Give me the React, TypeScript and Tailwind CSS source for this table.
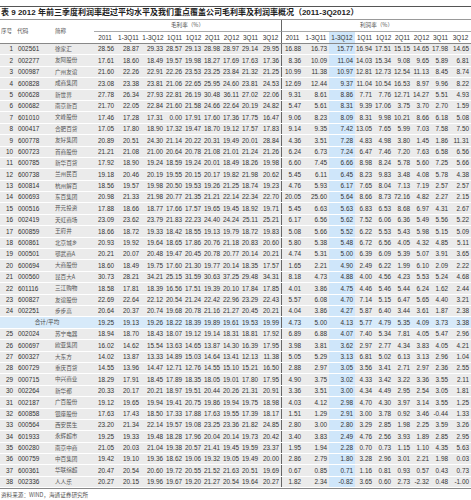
import React from "react";

const raw = `1|002561|徐家汇|28.56 28.87 29.33 28.57 29.13 28.98 28.97 29.14 29.95|16.88 16.73 15.77 16.94 17.51 15.15 14.65 17.98 14.65
2|002277|友阿股份|17.61 18.60 18.49 19.57 19.98 18.27 17.69 17.63 17.36|8.36 10.09 11.04 14.03 15.34 9.08 9.65 5.89 6.81
3|000987|广州友谊|21.60 22.26 22.91 22.26 23.53 23.25 23.84 21.32 21.25|10.99 11.38 10.97 12.81 12.73 12.54 11.13 8.45 8.74
4|600828|成商集团|23.08 23.38 23.81 21.06 22.65 25.95 24.60 23.81 24.53|12.69 12.44 9.37 11.04 10.54 16.53 8.97 9.96 8.22
5|600628|新世界|27.78 26.34 27.93 22.81 26.19 30.48 36.11 27.02 22.06|9.31 8.61 8.86 7.71 7.76 12.71 14.27 5.51 4.93
6|600682|南京新百|21.70 22.05 22.84 21.60 21.58 24.66 22.64 20.19 24.82|5.47 5.61 8.31 9.39 17.06 3.75 3.70 2.70 1.59
7|601010|文峰股份|17.46 17.28 17.31 0.00 17.91 17.60 17.36 17.75 16.47|9.06 8.23 8.09 8.31 9.98 10.21 8.66 6.18 5.08
8|000417|合肥百货|17.05 17.80 18.90 17.32 19.47 18.70 19.12 17.57 17.83|9.14 9.35 7.42 13.05 7.65 5.99 7.03 7.58 7.50
9|600778|友好集团|20.89 20.51 24.30 21.14 20.22 20.31 19.49 20.01 28.84|4.36 3.51 7.28 4.83 4.98 3.80 1.45 1.86 11.31
10|600723|首商股份|21.21 21.08 21.00 20.64 20.78 21.08 21.01 21.24 21.26|6.24 6.73 7.24 6.47 7.46 7.20 7.63 6.58 6.56
11|600785|新华百货|17.92 18.90 19.24 18.59 19.24 20.01 18.49 18.26 19.98|6.60 7.45 6.66 8.98 8.24 5.78 5.60 7.25 5.66
12|600738|兰州民百|19.18 20.46 20.19 19.55 20.15 20.17 19.82 21.98 20.62|5.45 6.11 6.45 8.23 9.83 3.48 4.08 5.78 4.38
13|600814|杭州解百|18.56 19.57 19.98 20.50 19.53 19.26 21.25 18.74 19.23|4.76 5.93 6.17 7.65 8.04 7.13 7.19 2.57 2.57
14|600693|东百集团|20.98 21.33 21.98 20.77 21.35 21.21 22.14 22.34 22.70|20.05 25.60 5.64 8.66 8.73 72.16 4.82 2.27 2.15
15|000516|开元投资|17.88 18.66 18.77 17.66 17.57 19.65 19.45 18.92 19.71|5.45 6.63 5.63 6.83 6.53 8.68 6.97 4.31 2.67
16|002419|天虹商场|23.09 23.62 23.79 21.83 22.23 24.40 24.24 25.11 25.21|6.17 6.56 5.62 7.52 6.06 6.36 5.49 5.56 5.22
17|600859|王府井|18.66 18.72 19.33 18.42 18.55 19.13 19.79 18.72 19.83|5.08 5.66 5.52 6.22 5.53 5.43 5.98 5.15 5.09
18|600861|北京城乡|20.93 19.92 19.64 18.65 17.86 20.76 21.18 20.83 20.60|5.80 5.38 5.48 6.72 6.56 4.05 4.32 4.85 5.11
19|000501|鄂武商A|20.21 20.07 20.48 19.47 20.45 20.78 20.77 20.14 20.21|4.74 5.31 5.00 6.39 6.09 5.39 5.07 3.91 3.65
20|600694|大商股份|18.60 18.49 19.75 17.60 21.30 19.77 20.14 18.35 17.57|1.65 2.21 4.90 2.49 6.22 1.99 6.10 2.09 2.22
21|000560|昆百大A|30.73 28.21 34.21 25.15 31.59 30.63 37.25 29.48 34.31|8.18 4.73 4.88 4.00 4.56 4.23 5.53 5.24 4.68
22|601116|三江购物|18.58 17.81 18.39 16.56 17.51 19.39 20.10 17.84 17.85|4.01 3.86 4.75 4.46 5.46 5.44 6.24 1.62 2.44
23|600827|友谊股份|22.69 22.64 22.12 20.54 21.24 22.42 22.96 23.29 22.43|5.57 6.08 4.70 7.14 5.15 6.47 5.65 4.40 3.21
24|002251|步步高|20.64 20.37 20.74 19.68 20.78 21.16 21.27 20.45 20.21|4.04 3.86 4.27 5.87 6.40 3.44 3.61 1.87 2.38
*||合计/平均|19.25 19.13 19.26 18.22 18.39 19.89 19.61 19.53 19.99|4.73 5.00 4.13 5.77 4.79 5.35 4.09 3.73 3.38
25|002024|苏宁电器|18.94 18.70 18.43 18.07 19.12 19.14 18.31 18.81 17.92|6.89 6.88 4.07 7.40 5.34 7.81 4.05 5.47 2.96
26|600697|欧亚集团|16.02 14.62 15.54 13.63 14.65 13.87 14.30 16.39 17.95|3.98 3.81 3.62 2.97 2.77 4.34 3.83 4.05 4.21
27|600327|大东方|14.02 13.87 13.33 14.89 15.03 14.64 13.41 12.13 11.38|5.05 5.29 3.13 6.81 5.02 6.13 3.13 2.96 1.04
28|600729|重庆百货|14.55 13.96 14.47 12.71 12.76 14.55 15.10 15.21 16.50|2.88 2.97 3.05 3.56 3.41 2.71 2.97 2.36 2.55
29|000715|中兴商业|18.29 17.91 18.45 17.89 18.35 18.05 19.01 17.80 17.95|4.90 3.75 3.02 4.33 3.42 3.22 3.36 3.55 2.11
30|002264|新华都|20.33 20.17 20.21 18.97 19.51 20.44 20.26 21.31 20.91|3.36 3.51 3.00 4.34 4.49 2.95 2.54 3.05 1.81
31|002187|广百股份|19.12 19.65 19.94 19.41 20.75 19.86 19.94 19.75 18.98|4.03 4.12 2.98 4.70 4.30 3.97 3.14 3.55 1.25
32|600858|银座股份|17.63 17.43 18.50 17.33 17.88 17.63 19.55 17.39 18.17|1.51 1.29 2.91 3.00 3.78 0.92 3.46 -0.44 1.33
33|000564|西安民生|23.20 21.34 22.14 19.57 19.08 23.25 23.36 21.82 24.85|2.80 3.00 2.80 3.29 2.85 1.98 2.25 3.59 3.26
34|601933|永辉超市|19.25 19.33 19.48 18.28 17.96 20.04 20.14 19.73 20.42|3.40 3.83 2.49 4.76 2.56 3.93 1.89 2.85 2.95
35|600280|南京中商|21.05 20.03 21.04 19.38 20.57 21.41 19.45 19.59 23.37|1.95 1.94 2.28 0.70 0.73 1.15 1.10 4.35 5.63
36|000759|中百集团|19.42 19.10 19.36 18.62 19.06 19.32 19.05 19.49 20.00|2.86 2.79 1.80 3.28 2.96 3.01 2.21 1.98 0.03
37|600361|华联综超|20.47 20.54 20.60 19.72 20.55 21.52 21.63 20.51 19.69|0.67 0.85 0.71 1.16 0.81 0.93 0.57 0.43 0.73
38|002336|人人乐|20.27 20.15 19.96 19.67 19.20 21.27 20.54 19.64 20.27|1.82 2.34 -0.82 3.65 0.60 2.73 -2.32 0.48 -1.00`;

const rows = raw.split("\n").map((line) => {
  const [no, code, name, gross, profit] = line.split("|");
  return { no, code, name, gross: gross.split(" "), profit: profit.split(" ") };
});

const periods = ["2011", "1-3Q11", "1-3Q12", "1Q11", "1Q12", "2Q11", "2Q12", "3Q11", "3Q12"];

// fixed column widths, total 471
const grid =
  "grid grid-cols-[14px_34px_46px_22px_25px_24px_19px_19px_19px_19px_19px_21px_22px_26px_26px_19px_19px_19px_19px_19px_21px]";

const cjk = "font-['Noto_Sans_CJK_SC',sans-serif]";

export default function App() {
  return (
    <div className="w-[471px] h-[500px] bg-white text-[#333] font-['Liberation_Sans','Noto_Sans_CJK_SC',sans-serif] overflow-hidden">
      {/* title */}
      <div className="mt-[6px] border-t border-[#555] border-b border-b-[#999] h-[14px] flex items-center pl-[1px] text-[8px] font-bold text-[#222] whitespace-nowrap">
        表 9 2012 年前三季度利润率超过平均水平及我们重点覆盖公司毛利率及利润率概况（2011-3Q2012）
      </div>

      {/* header */}
      <div className={`${grid} grid-rows-[12px_11px] text-[6.4px] border-b border-[#888]`}>
        <div className={`row-span-2 col-span-2 flex items-center pl-[1px] ${cjk} text-[5.6px] text-[#555] gap-[5px]`}>
          <span>序号</span>
          <span>代码</span>
        </div>
        <div className={`row-span-2 flex items-center pl-[7px] ${cjk} text-[5.6px] text-[#555]`}>简称</div>
        <div className={`col-span-9 flex items-center justify-center border-b border-[#aaa] ${cjk} text-[5.6px] text-[#555]`}>
          毛利率（%）
        </div>
        <div className={`col-span-9 flex items-center justify-center border-b border-[#aaa] border-l border-l-[#666] ${cjk} text-[5.6px] text-[#555]`}>
          利润率（%）
        </div>
        {periods.map((p) => (
          <div key={"g" + p} className="flex items-center justify-center">
            {p}
          </div>
        ))}
        {periods.map((p, i) => (
          <div
            key={"p" + p}
            className={`flex items-center justify-center ${i === 0 ? "border-l border-[#666]" : ""} ${
              i === 2 ? "bg-[#cfe6fa]" : ""
            }`}
          >
            {p}
          </div>
        ))}
      </div>

      {/* body */}
      <div className="border-b border-[#888]">
        {rows.map((r) => {
          const total = r.no === "*";
          return (
            <div
              key={r.no + r.code}
              className={`${grid} h-[11.4px] text-[6.4px] border-b border-white ${
                total ? "bg-[#d7eafa]" : "bg-[#ebebeb]"
              }`}
            >
              {total ? (
                <div className={`col-span-3 flex items-center justify-center ${cjk} text-[5.6px] text-[#444]`}>
                  {r.name}
                </div>
              ) : (
                <>
                  <div className="flex items-center justify-end pr-[1px]">{r.no}</div>
                  <div className="flex items-center pl-[4px]">{r.code}</div>
                  <div className={`flex items-center pl-[7px] ${cjk} text-[5.6px] text-[#555] whitespace-nowrap`}>
                    {r.name}
                  </div>
                </>
              )}
              {r.gross.map((v, i) => (
                <div key={"g" + i} className="flex items-center justify-end pr-[2px]">
                  {v}
                </div>
              ))}
              {r.profit.map((v, i) => (
                <div
                  key={"p" + i}
                  className={`flex items-center justify-end pr-[2px] ${i === 0 ? "border-l border-[#666]" : ""} ${
                    i === 2 ? "bg-[#cfe6fa]" : ""
                  }`}
                >
                  {v}
                </div>
              ))}
            </div>
          );
        })}
      </div>

      <div className={`mt-[2px] pl-[1px] ${cjk} text-[5.6px] text-[#555]`}>资料来源：WIND，海通证券研究所</div>
    </div>
  );
}
